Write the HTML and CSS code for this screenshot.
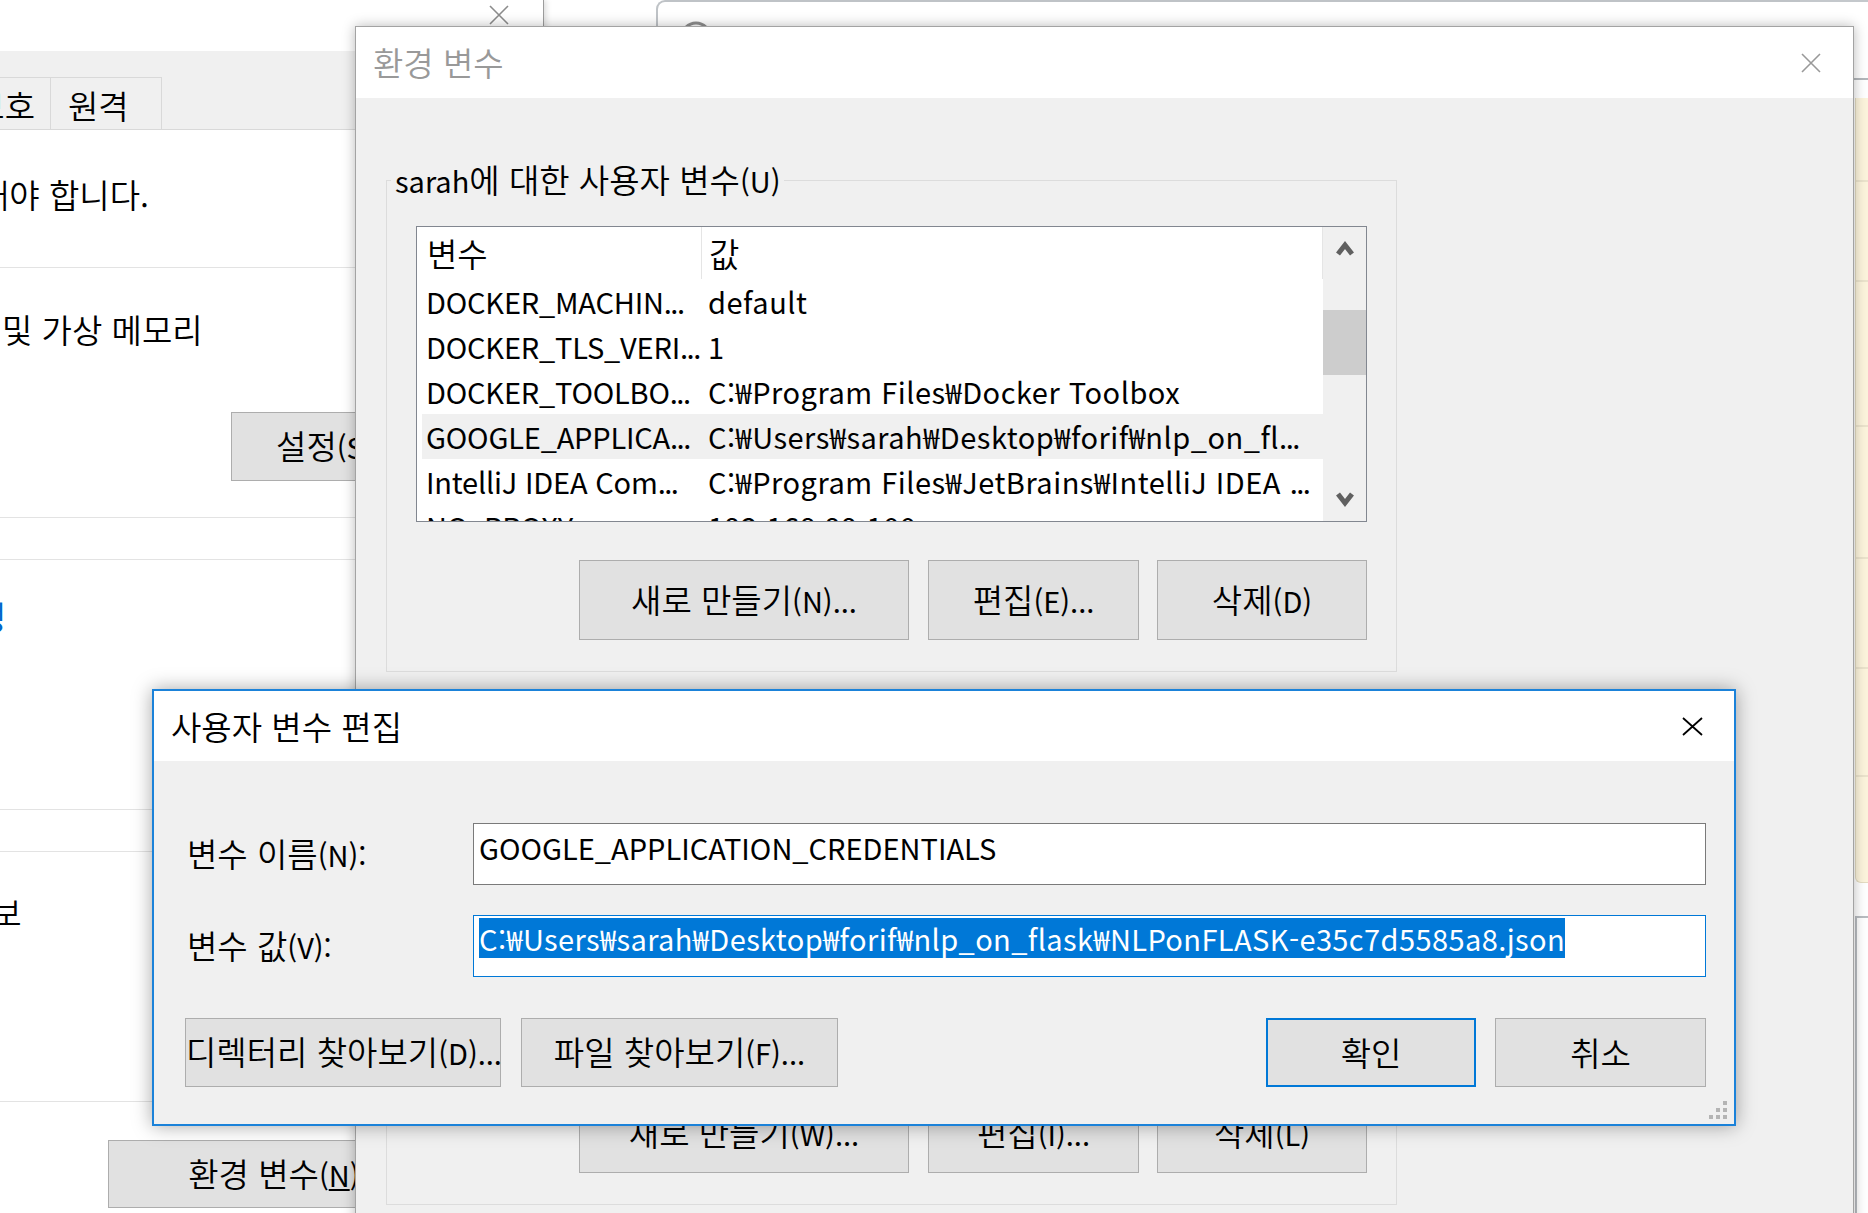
FILE: index.html
```html
<!DOCTYPE html>
<html lang="ko">
<head>
<meta charset="utf-8">
<title>환경 변수</title>
<link rel="stylesheet" href="styles.css">
</head>
<body>
<div class="desk">

  <!-- background: System Properties window -->
  <div class="win win-sys">
    <div class="sys-title">
      <svg class="ico-x" width="20" height="20" viewBox="0 0 20 20"><path d="M1 1 L19 19 M19 1 L1 19" stroke="#8c8c8c" stroke-width="1.6" fill="none"/></svg>
    </div>
    <div class="sys-tabs">
      <div class="tab tab-first k">보호</div>
      <div class="tab k">원격</div>
    </div>
    <div class="sys-content">
      <div class="sec sec1"><span class="shift-a k">해야 합니다.</span></div>
      <div class="sec sec2">
        <div class="t-mem k">및 가상 메모리</div>
        <div class="btn btn-set"><span class="k">설정</span>(S)...</div>
      </div>
      <div class="sec sec-gap"></div>
      <div class="sec sec3"><span class="link k">정</span></div>
      <div class="sec sec-gap"></div>
      <div class="sec sec5"><span class="shift-b k">정보</span></div>
      <div class="sec sec6"><div class="btn btn-env"><span class="k">환경 변수</span>(<u>N</u>)...</div></div>
    </div>
  </div>

  <!-- background: window with search box at the top -->
  <div class="win win-top">
    <div class="search">
      <svg width="34" height="34" viewBox="0 0 34 34"><circle cx="17" cy="17" r="14" stroke="#8e8e8e" stroke-width="3" fill="none"/></svg>
      <span class="search-txt">Search</span>
    </div>
  </div>

  <!-- background: window at the right edge -->
  <div class="win win-right">
    <div class="rs-line"></div>
    <div class="rs-panel">
      <div class="rs-row r1"></div>
      <div class="rs-row r2"></div>
      <div class="rs-row r3"></div>
      <div class="rs-row r4"></div>
      <div class="rs-row r5"></div>
      <div class="rs-row r6"></div>
      <div class="rs-row r7"></div>
    </div>
    <div class="rs-box"></div>
  </div>

  <!-- 환경 변수 dialog -->
  <div class="win win-env">
    <div class="env-title">
      <span class="k">환경 변수</span>
      <svg width="20" height="20" viewBox="0 0 20 20"><path d="M1 1 L19 19 M19 1 L1 19" stroke="#999" stroke-width="1.6" fill="none"/></svg>
    </div>
    <div class="env-body">
      <div class="group">
        <div class="group-label">sarah<span class="k">에 대한 사용자 변수</span>(U)</div>
        <div class="list">
          <div class="list-main">
            <div class="list-head">
              <div class="lh1 k">변수</div>
              <div class="lh2 k">값</div>
            </div>
            <div class="row"><div class="c1">DOCKER_MACHIN<span class="dots">...</span></div><div class="c2">default</div></div>
            <div class="row"><div class="c1">DOCKER_TLS_VERI<span class="dots">...</span></div><div class="c2">1</div></div>
            <div class="row"><div class="c1">DOCKER_TOOLBO<span class="dots">...</span></div><div class="c2">C:₩Program Files₩Docker Toolbox</div></div>
            <div class="row sel"><div class="c1">GOOGLE_APPLICA<span class="dots">...</span></div><div class="c2">C:₩Users₩sarah₩Desktop₩forif₩nlp_on_fl<span class="dots">...</span></div></div>
            <div class="row"><div class="c1">IntelliJ IDEA Com<span class="dots">...</span></div><div class="c2">C:₩Program Files₩JetBrains₩IntelliJ IDEA <span class="dots">...</span></div></div>
            <div class="row"><div class="c1">NO_PROXY</div><div class="c2">192.168.99.100</div></div>
          </div>
          <div class="vscroll">
            <div class="sb-btn"><svg width="18" height="16" viewBox="0 0 18 16"><polyline points="2,14 9,5 16,14" stroke="#606060" stroke-width="5" fill="none"/></svg></div>
            <div class="sb-thumb"></div>
            <div class="sb-track"></div>
            <div class="sb-btn"><svg width="18" height="16" viewBox="0 0 18 16"><polyline points="2,2 9,11 16,2" stroke="#606060" stroke-width="5" fill="none"/></svg></div>
          </div>
        </div>
        <div class="btn-row">
          <div class="btn b-new"><span class="k">새로 만들기</span>(N)...</div>
          <div class="btn b-edit"><span class="k">편집</span>(E)...</div>
          <div class="btn b-del"><span class="k">삭제</span>(D)</div>
        </div>
      </div>

      <div class="group g2">
        <div class="group-label"><span class="k">시스템 변수</span>(S)</div>
        <div class="list">
          <div class="list-main">
            <div class="list-head">
              <div class="lh1 k">변수</div>
              <div class="lh2 k">값</div>
            </div>
          </div>
          <div class="vscroll"></div>
        </div>
        <div class="btn-row">
          <div class="btn b-new"><span class="k">새로 만들기</span>(W)...</div>
          <div class="btn b-edit"><span class="k">편집</span>(I)...</div>
          <div class="btn b-del"><span class="k">삭제</span>(L)</div>
        </div>
      </div>
    </div>
  </div>

  <!-- 사용자 변수 편집 dialog -->
  <div class="win win-edit">
    <div class="edit-title">
      <span class="k">사용자 변수 편집</span>
      <svg width="21" height="19" viewBox="0 0 21 19"><path d="M1 1 L20 18 M20 1 L1 18" stroke="#000" stroke-width="1.8" fill="none"/></svg>
    </div>
    <div class="edit-body">
      <div class="field">
        <div class="flabel"><span class="k">변수 이름</span>(N):</div>
        <div class="tbox">GOOGLE_APPLICATION_CREDENTIALS</div>
      </div>
      <div class="field field2">
        <div class="flabel"><span class="k">변수 값</span>(V):</div>
        <div class="tbox focus"><span class="seltext">C:₩Users₩sarah₩Desktop₩forif₩nlp_on_flask₩NLPonFLASK-e35c7d5585a8.json</span></div>
      </div>
      <div class="edit-btns">
        <div class="btn e-dir"><span class="k">디렉터리 찾아보기</span>(D)...</div>
        <div class="btn e-file"><span class="k">파일 찾아보기</span>(F)...</div>
        <div class="spacer"></div>
        <div class="btn e-ok k">확인</div>
        <div class="btn e-cancel k">취소</div>
      </div>
    </div>
    <svg class="grip" width="20" height="18" viewBox="0 0 20 18">
      <rect x="15" y="0" width="4" height="4" fill="#b4b4b4"/>
      <rect x="15" y="7" width="4" height="4" fill="#b4b4b4"/>
      <rect x="8" y="7" width="4" height="4" fill="#b4b4b4"/>
      <rect x="15" y="14" width="4" height="4" fill="#b4b4b4"/>
      <rect x="8" y="14" width="4" height="4" fill="#b4b4b4"/>
      <rect x="1" y="14" width="4" height="4" fill="#b4b4b4"/>
    </svg>
  </div>

</div>
</body>
</html>
```

FILE: styles.css
```css
* { box-sizing: border-box; }

html, body {
  margin: 0;
  padding: 0;
}

body {
  width: 1868px;
  height: 1213px;
  overflow: hidden;
  background: #ffffff;
  font-family: "Noto Sans CJK KR", "Noto Sans", sans-serif;
  font-size: 29px;
  color: #000;
}

/* Hangul runs are drawn a little larger and lighter than Latin, as in Malgun Gothic */
.k { font-size: 33px; font-weight: 350; }
span.k { line-height: 0; }

.dots { letter-spacing: -1.5px; }

.desk {
  position: relative;
  width: 1868px;
  height: 1213px;
  overflow: hidden;
}

.win {
  position: absolute;
}

/* ---------- System Properties (left, background) ---------- */
.win-sys {
  left: 0;
  top: 0;
  width: 544px;
  height: 1213px;
  background: #fff;
  border-right: 1px solid #9c9c9c;
  box-shadow: 2px 0 6px rgba(0, 0, 0, 0.15);
  z-index: 2;
  overflow: hidden;
}

.sys-title {
  height: 51px;
  display: flex;
  justify-content: flex-end;
  align-items: flex-start;
  padding: 5px 34px 0 0;
}

.sys-tabs {
  height: 79px;
  background: #f0f0f0;
  border-bottom: 1px solid #d9d9d9;
  display: flex;
  align-items: flex-end;
}

.tab {
  height: 52px;
  line-height: 52px;
  padding-top: 1px;
  border: 1px solid #d9d9d9;
  border-bottom: none;
  width: 112px;
  padding-left: 17px;
  white-space: nowrap;
  margin-left: -1px;
}

.tab-first {
  width: 80px;
  margin-left: -29px;
  padding-left: 0;
  text-align: right;
  padding-right: 15px;
}

.sys-content {
  display: flex;
  flex-direction: column;
}

.sec {
  border-bottom: 1px solid #e3e3e3;
  line-height: 45px;
  white-space: nowrap;
  overflow: hidden;
  flex: none;
}

.sec1 { height: 138px; padding-top: 43px; }
.sec2 { height: 250px; padding-top: 39px; }
.sec-gap { height: 42px; }
.sec3 { height: 250px; padding-top: 35px; }
.sec5 { height: 250px; padding-top: 39px; }
.sec6 { border-bottom: none; padding-top: 38px; }

.shift-a { display: inline-block; margin-left: -21px; line-height: 45px; }
.shift-b { display: inline-block; margin-left: -39px; line-height: 45px; }
.t-mem { margin-left: 2px; }
.link { display: inline-block; margin-left: -24px; color: #0066cc; line-height: 45px; }

.btn {
  background: #e1e1e1;
  border: 1px solid #adadad;
  text-align: center;
  white-space: nowrap;
  flex: none;
}

.btn-set {
  margin-top: 60px;
  margin-left: 231px;
  width: 212px;
  height: 69px;
  line-height: 67px;
}

.btn-env {
  margin-left: 108px;
  width: 356px;
  height: 68px;
  line-height: 66px;
}

/* ---------- top window with search box ---------- */
.win-top {
  left: 544px;
  top: 0;
  width: 1324px;
  height: 140px;
  background: #fff;
  z-index: 1;
}

.search {
  margin-left: 112px;
  height: 120px;
  border-top: 2px solid #bfc3c7;
  border-left: 2px solid #bfc3c7;
  border-top-left-radius: 9px;
  display: flex;
  align-items: flex-start;
  padding: 18px 0 0 21px;
  gap: 32px;
}

.search-txt {
  color: #8a8a8a;
  line-height: 45px;
  margin-top: -6px;
}

/* ---------- right edge window ---------- */
.win-right {
  left: 1800px;
  top: 0;
  width: 68px;
  height: 1213px;
  background: #fff;
  z-index: 1;
  border-top: 2px solid #c4c8cc;
}

.rs-line {
  margin-top: 76px;
  border-top: 2px solid #b3b7bb;
}

.rs-panel {
  margin-top: 18px;
  margin-left: 55px;
  height: 785px;
  background: #fcf4dc;
  border-left: 1px solid #e4dcc2;
  border-bottom: 1px solid #e4dcc2;
  border-bottom-left-radius: 6px;
  display: flex;
  flex-direction: column;
}

.rs-row { flex: none; border-top: 2px solid #ebe3cc; }
.rs-row.r1 { height: 82px; border-top: none; }
.rs-row.r2 { height: 100px; }
.rs-row.r3 { height: 145px; }
.rs-row.r4 { height: 132px; }
.rs-row.r5 { height: 110px; }
.rs-row.r6 { height: 108px; }
.rs-row.r7 { height: 107px; }

.rs-box {
  margin-top: 33px;
  margin-left: 55px;
  height: 400px;
  border-top: 2px solid #b8bcc0;
  border-left: 2px solid #b8bcc0;
}

/* ---------- 환경 변수 dialog ---------- */
.win-env {
  left: 355px;
  top: 26px;
  width: 1499px;
  height: 1260px;
  background: #f0f0f0;
  border: 1px solid #a3a3a3;
  box-shadow: 0 0 12px rgba(0, 0, 0, 0.28);
  z-index: 3;
}

.env-title {
  height: 71px;
  line-height: 71px;
  background: #fff;
  color: #999;
  display: flex;
  justify-content: space-between;
  align-items: center;
  padding: 0 32px 0 17px;
}

.env-title svg { display: block; }
.env-title span.k { line-height: 71px; }

.env-body {
  padding: 82px 0 0 30px;
}

.group {
  position: relative;
  width: 1011px;
  border: 1px solid #dcdcdc;
  padding: 45px 29px 31px 29px;
}

.group.g2 { margin-top: 41px; }

.group-label {
  position: absolute;
  top: -16px;
  left: 4px;
  padding: 0 4px;
  height: 31px;
  line-height: 30px;
  background: #f0f0f0;
  white-space: nowrap;
}

.list {
  height: 296px;
  border: 1px solid #828790;
  background: #fff;
  display: flex;
}

.list-main {
  flex: 1;
  overflow: hidden;
  min-width: 0;
}

.list-head {
  display: flex;
  height: 52px;
  line-height: 52px;
}

.lh1 {
  width: 285px;
  flex: none;
  padding-left: 10px;
  border-right: 1px solid #e5e5e5;
}

.lh2 {
  flex: 1;
  padding-left: 7px;
  border-right: 1px solid #e5e5e5;
}

.row {
  display: flex;
  height: 45px;
  line-height: 45px;
  margin-left: 5px;
  padding-left: 4px;
  white-space: nowrap;
}

.row.sel { background: #f0f0f0; }

.c1 { width: 282px; flex: none; overflow: hidden; letter-spacing: -0.2px; }
.c1 .dots { letter-spacing: -1.5px; }
.c2 { flex: 1; overflow: hidden; min-width: 0; letter-spacing: 0.5px; }

.vscroll {
  width: 43px;
  flex: none;
  background: #f0f0f0;
  display: flex;
  flex-direction: column;
}

.sb-btn {
  height: 42px;
  flex: none;
  display: flex;
  align-items: center;
  justify-content: center;
}

.sb-btn svg { display: block; }

.sb-thumb {
  margin-top: 41px;
  height: 65px;
  flex: none;
  background: #cdcdcd;
}

.sb-track { flex: 1; }

.btn-row {
  display: flex;
  justify-content: flex-end;
  margin-top: 38px;
}

.btn-row .btn {
  height: 80px;
  line-height: 78px;
}

.b-new { width: 330px; }
.b-edit { width: 211px; margin-left: 19px; }
.b-del { width: 210px; margin-left: 18px; }

/* ---------- 사용자 변수 편집 dialog ---------- */
.win-edit {
  left: 152px;
  top: 689px;
  width: 1584px;
  height: 437px;
  background: #f0f0f0;
  border: 2px solid #1b82d9;
  box-shadow: 0 0 18px rgba(0, 0, 0, 0.35);
  z-index: 4;
}

.edit-title {
  height: 70px;
  line-height: 70px;
  background: #fff;
  display: flex;
  justify-content: space-between;
  align-items: center;
  padding: 0 31px 0 17px;
}

.edit-title svg { display: block; }
.edit-title span.k { line-height: 70px; }

.edit-body {
  padding: 62px 28px 0 31px;
}

.field {
  display: flex;
  height: 62px;
}

.field2 { margin-top: 30px; }

.flabel {
  width: 288px;
  flex: none;
  padding-left: 2px;
  line-height: 62px;
  white-space: nowrap;
}

.tbox {
  flex: 1;
  background: #fff;
  border: 1px solid #7a7a7a;
  padding: 3px 5px 0 5px;
  line-height: 40px;
  white-space: nowrap;
  overflow: hidden;
}

.tbox.focus { border-color: #0078d7; padding-top: 2px; }

.seltext {
  display: inline-block;
  background: #0078d7;
  color: #fff;
  line-height: 40px;
  letter-spacing: 0.4px;
}

.edit-btns {
  display: flex;
  margin-top: 41px;
}

.edit-btns .btn {
  height: 69px;
  line-height: 67px;
}

.e-dir { width: 316px; }
.e-file { width: 317px; margin-left: 20px; }
.spacer { flex: 1; }
.edit-btns .e-ok { width: 210px; border: 2px solid #0078d7; line-height: 65px; }
.e-cancel { width: 211px; margin-left: 19px; }

.grip {
  position: absolute;
  right: 6px;
  bottom: 5px;
  display: block;
}
```
